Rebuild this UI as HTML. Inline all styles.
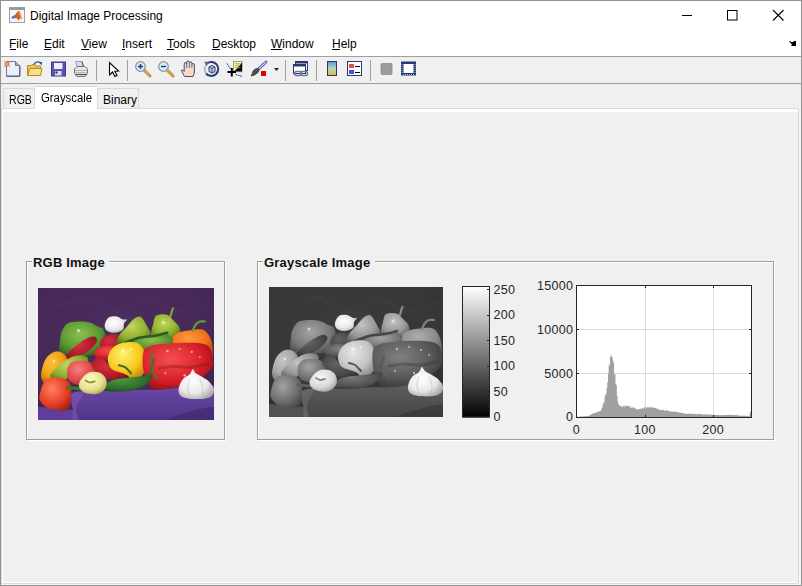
<!DOCTYPE html>
<html><head><meta charset="utf-8">
<style>
*{margin:0;padding:0;box-sizing:border-box}
html,body{width:802px;height:586px;overflow:hidden;background:#f0f0f0;font-family:"Liberation Sans",sans-serif;color:#000}
.a{position:absolute}
#win{position:absolute;left:0;top:0;width:802px;height:586px;border:1px solid #939393;background:#f0f0f0}
#title{left:0;top:0;width:801px;height:56px;background:#fff}
.t{position:absolute;font-size:12px;white-space:nowrap;line-height:14px}
.menu u{text-decoration:none;border-bottom:1px solid #000}
.sep{position:absolute;width:1px;height:21px;top:60px;background:#a0a0a0}
.tab{position:absolute;border:1px solid #d9d9d9;border-bottom:none;background:#f0f0f0}
.lbl{position:absolute;font-size:12px;white-space:nowrap;line-height:12px;color:#262626}
.ptitle{position:absolute;font-size:13px;font-weight:bold;white-space:nowrap;line-height:13px;background:#f0f0f0;padding:0 5px 0 2px;color:#111;letter-spacing:0.2px}
</style></head><body>
<div id="win"></div>
<div class="a" style="left:1px;top:1px;width:800px;height:55px;background:#fff"></div>
<!-- window border lines -->
<div class="a" style="left:0;top:0;width:802px;height:1px;background:#939393"></div>
<div class="a" style="left:0;top:0;width:1px;height:586px;background:#939393"></div>
<div class="a" style="left:801px;top:0;width:1px;height:586px;background:#939393"></div>
<div class="a" style="left:0;top:585px;width:802px;height:1px;background:#939393"></div>
<svg class="a" style="left:0;top:0" width="802" height="90" viewBox="0 0 802 90">
<!-- title icon -->
<rect x="9.5" y="7.5" width="15" height="15" fill="#f4f4f4" stroke="#9aa0a8"/>
<rect x="10" y="8" width="14" height="2" fill="#8c9cb0"/>
<path d="M11 17.5 L15 15 L18 11 L20 11.5 L22 19.5 L20.5 18 L18.5 20.5 L16.5 18 L13 18.5 Z" fill="#d06020"/>
<path d="M11 17.5 L15 15 L16.5 17.5 L13 18.5 Z" fill="#4a80b8"/>
<path d="M18 11 L20 11.5 L22 19.5 L20.5 18 Z" fill="#f0a040"/>
<!-- title bar buttons -->
<rect x="682" y="15" width="10" height="1" fill="#000"/>
<rect x="727.5" y="10.5" width="9.5" height="9.5" fill="none" stroke="#000"/>
<path d="M773 10 L783.5 20.5 M783.5 10 L773 20.5" stroke="#000" stroke-width="1.1"/>
<!-- dock arrow -->
<path d="M789 41.5 L790 41 L791 42 L793 42 L794 41 L796 41 L796 46 L791 46 L792 44.5 L790.5 43 Z" fill="#000"/>
<!-- menu underlines -->
<g fill="#000">
<rect x="10" y="49" width="6" height="1"/>
<rect x="44" y="49" width="7" height="1"/>
<rect x="81" y="49" width="8" height="1"/>
<rect x="122" y="49" width="3" height="1"/>
<rect x="167" y="49" width="7" height="1"/>
<rect x="212" y="49" width="8" height="1"/>
<rect x="271" y="49" width="11" height="1"/>
<rect x="332" y="49" width="8" height="1"/>
</g>
<!-- new doc -->
<path d="M6.5 61.5 H15.5 L19.5 65.5 V76.5 H6.5 Z" fill="#eaf1fb" stroke="#6b7a9c"/>
<path d="M15.5 61.5 V65.5 H19.5" fill="#9fb0d0" stroke="#6b7a9c"/>
<path d="M7 76 H20 V66" fill="none" stroke="#4f5d80" stroke-width="1"/>
<circle cx="7" cy="64" r="2.2" fill="#f0a060" stroke="#d06a30" stroke-width="0.8"/>
<path d="M4 61 L5 62 M10 61 L9 62 M4 67 L5 66 M10 67 L9 66" stroke="#c06030" stroke-width="0.7"/>
<!-- folder -->
<path d="M27.5 65.5 H31 L32 64.5 H35 L36 66 H40.5 V75.5 H27.5 Z" fill="#e9c555" stroke="#b08a28"/>
<path d="M27.5 75.5 L30 68.5 H42 L40.5 75.5 Z" fill="#f7e08a" stroke="#b08a28"/>
<path d="M34 64 Q37 60.5 40.5 63" fill="none" stroke="#2a5a90" stroke-width="1.2"/>
<path d="M39 62 L42 62 L41.5 65.5 Z" fill="#1a4a80"/>
<!-- floppy -->
<rect x="51.5" y="62" width="14" height="14" fill="#5555b5" stroke="#3a3a90"/>
<rect x="54" y="63" width="8.5" height="6" fill="#eef0ff"/>
<rect x="55" y="71" width="6.5" height="4.5" fill="#e0e0f0"/>
<rect x="55.5" y="71.5" width="2" height="2" fill="#202040"/>
<!-- printer -->
<path d="M75.5 61.5 H82 L83.5 66.5 H77 Z" fill="#cfdcf2" stroke="#8898b0" stroke-width="0.9"/>
<path d="M82 61.5 L83.5 66.5" stroke="#505a70" stroke-width="1"/>
<path d="M74.5 69 L77 66.5 H85 L87.5 69 V73.5 L85 76.5 H77 L74.5 73.5 Z" fill="#e6e6e6" stroke="#6a6a6a" stroke-width="0.9"/>
<path d="M75 70.5 H87 M75.5 72.5 H86.5" stroke="#a8a8a8" stroke-width="0.8"/>
<path d="M75.5 74.5 H86.5" stroke="#505050" stroke-width="1.2"/>
<!-- arrow pointer -->
<path d="M109.5 62.5 V75 L112.5 72 L115 76.5 L117 75.5 L114.8 71.2 L118.5 71 Z" fill="#fff" stroke="#000" stroke-width="1.1" stroke-linejoin="miter"/>
<!-- zoom in -->
<path d="M144 70 L150 76" stroke="#a06818" stroke-width="2.8" stroke-linecap="round"/>
<path d="M144 70 L150 76" stroke="#e8b050" stroke-width="1.6" stroke-linecap="round"/>
<circle cx="140.5" cy="66.5" r="4.8" fill="#d8ecf8" stroke="#8090a8" stroke-width="1.2"/>
<path d="M138 66.5 H143 M140.5 64 V69" stroke="#1a3a7a" stroke-width="1.4"/>
<!-- zoom out -->
<path d="M167 70 L173 76" stroke="#a06818" stroke-width="2.8" stroke-linecap="round"/>
<path d="M167 70 L173 76" stroke="#e8b050" stroke-width="1.6" stroke-linecap="round"/>
<circle cx="163.5" cy="66.5" r="4.8" fill="#d8ecf8" stroke="#8090a8" stroke-width="1.2"/>
<path d="M161 66.5 H166" stroke="#1a3a7a" stroke-width="1.4"/>
<!-- hand -->
<path d="M184.5 76.5 L181.8 71.5 Q181 69.5 182.8 70 L184.2 71.5 V64 Q184.2 62.5 185.5 62.5 Q186.5 62.5 186.6 64 V62.3 Q186.7 61 188 61 Q189.2 61 189.3 62.3 V63 Q189.4 61.8 190.6 61.8 Q191.8 61.8 191.9 63.2 V64.5 Q192 63.5 193.2 63.5 Q194.4 63.6 194.4 65 V71 Q194.5 74 193 76.5 Z" fill="#f6dcc0" stroke="#2a3a80" stroke-width="0.9"/>
<path d="M186.6 64 V68 M189.3 63 V68 M191.9 64.5 V68" stroke="#2a3a80" stroke-width="0.7"/>
<!-- rotate -->
<path d="M206.8 63.5 A7 7 0 1 1 206 73.5" fill="none" stroke="#2a3a70" stroke-width="2"/>
<path d="M206 73.5 A7 7 0 0 1 205.5 66.5" fill="none" stroke="#b8bcc8" stroke-width="2"/>
<path d="M204.5 61.5 L209.5 62 L206 66.5 Z" fill="#4a6aa0"/>
<path d="M209 67 L212 65.5 L215 67 V71.5 L212 73 L209 71.5 Z" fill="#c0cce8" stroke="#2a3a70" stroke-width="1"/>
<path d="M209 67 L212 68.5 L215 67 M212 68.5 V73" fill="none" stroke="#2a3a70" stroke-width="0.8"/>
<!-- data cursor -->
<rect x="233.5" y="61.5" width="8.5" height="9.5" fill="#f8f2b0" stroke="#a8a868"/>
<path d="M242.5 62 V72 H234" stroke="#c8c8a0" stroke-width="1"/>
<path d="M235 63.8 H240.5 M235 65.8 H240.5 M235 67.8 H240.5" stroke="#a09a60" stroke-width="0.9"/>
<path d="M227 63.5 L230.5 69 M235.5 74.5 L242.5 76.5" stroke="#2020b0" stroke-width="1" stroke-dasharray="1.6 0.8"/>
<path d="M227.5 72 H236 M231.8 68 V76.5" stroke="#000" stroke-width="2"/>
<!-- brush -->
<path d="M266 62 L258 69.5" stroke="#30409a" stroke-width="2.8" stroke-linecap="round"/>
<path d="M266 62 L258 69.5" stroke="#c8d4f0" stroke-width="1.2" stroke-linecap="round"/>
<path d="M258.5 68.5 Q255 68 253 71 Q252 74 251 76 Q255 75.5 257.5 73 Q260 71 258.5 68.5 Z" fill="#505050" stroke="#303030" stroke-width="0.6"/>
<rect x="261" y="71" width="5" height="5" fill="#e00000"/>
<path d="M274 68 H279 L276.5 71 Z" fill="#202020"/>
<!-- linked -->
<rect x="295.5" y="61.5" width="12" height="9" fill="#fff" stroke="#2a3a70"/>
<rect x="295.5" y="61.5" width="12" height="2" fill="#2a3a70"/>
<rect x="293.5" y="64.5" width="12" height="9" fill="#fff" stroke="#2a3a70"/>
<rect x="293.5" y="64.5" width="12" height="2" fill="#2a3a70"/>
<rect x="294.5" y="71.5" width="7" height="4" rx="2" fill="none" stroke="#6a7a9a" stroke-width="1.4"/>
<rect x="300.5" y="71.5" width="7" height="4" rx="2" fill="none" stroke="#6a7a9a" stroke-width="1.4"/>
<!-- colorbar icon -->
<defs><linearGradient id="cbg" x1="0" y1="0" x2="0" y2="1"><stop offset="0" stop-color="#6a8ae8"/><stop offset="0.5" stop-color="#a8e0b0"/><stop offset="1" stop-color="#f0b040"/></linearGradient></defs>
<rect x="327.5" y="61.5" width="9" height="14" fill="url(#cbg)" stroke="#303860"/>
<!-- legend -->
<rect x="347.5" y="61.5" width="14" height="14" fill="#fff" stroke="#2a3a70"/>
<rect x="349" y="64" width="5" height="4" fill="#e05050"/>
<rect x="349" y="70" width="5" height="4" fill="#5050e0"/>
<path d="M355 66.5 H360 M355 72.5 H360" stroke="#000" stroke-width="1"/>
<!-- gray square -->
<rect x="381" y="63.5" width="11" height="11" rx="1" fill="#9c9c9c" stroke="#8a8a8a" stroke-width="0.8"/>
<!-- plot tools -->
<rect x="401" y="61.5" width="15" height="14" fill="#2a3a70"/>
<rect x="403.5" y="64" width="10" height="9" fill="#fff"/>
<path d="M402 64 V73 M415 64 V73 M403 74.5 H414" stroke="#c8d0e8" stroke-width="0.8" stroke-dasharray="1 1"/>
</svg>

<!-- title -->
<div class="t" style="left:30px;top:9px">Digital Image Processing</div>
<!-- menu -->
<div class="t" style="left:9px;top:37px">File</div>
<div class="t" style="left:44px;top:37px">Edit</div>
<div class="t" style="left:81px;top:37px">View</div>
<div class="t" style="left:122px;top:37px">Insert</div>
<div class="t" style="left:167px;top:37px">Tools</div>
<div class="t" style="left:212px;top:37px">Desktop</div>
<div class="t" style="left:271px;top:37px">Window</div>
<div class="t" style="left:332px;top:37px">Help</div>
<!-- toolbar lines -->
<div class="a" style="left:1px;top:56px;width:800px;height:1px;background:#a0a0a0"></div>
<div class="a" style="left:1px;top:83px;width:800px;height:1px;background:#a0a0a0"></div>
<div class="sep" style="left:96px"></div>
<div class="sep" style="left:127px"></div>
<div class="sep" style="left:285px"></div>
<div class="sep" style="left:316px"></div>
<div class="sep" style="left:370px"></div>
<!-- tabs -->
<div class="tab" style="left:3px;top:88px;width:32px;height:21px"></div>
<div class="tab" style="left:97px;top:88px;width:42px;height:21px"></div>
<!-- tab panel -->
<div class="a" style="left:1px;top:108px;width:798px;height:1px;background:#d9d9d9"></div>
<div class="a" style="left:2px;top:109px;width:796px;height:3px;background:#fff"></div>
<div class="a" style="left:2px;top:109px;width:1px;height:474px;background:#fff"></div>
<div class="a" style="left:1px;top:109px;width:1px;height:476px;background:#dadada"></div>
<div class="a" style="left:798px;top:108px;width:1px;height:476px;background:#d9d9d9"></div>
<div class="a" style="left:799px;top:108px;width:2px;height:477px;background:#f5f5f5"></div>
<div class="a" style="left:2px;top:582px;width:796px;height:1px;background:#fff"></div>
<div class="a" style="left:1px;top:583px;width:798px;height:1px;background:#d9d9d9"></div>
<div class="a" style="left:1px;top:584px;width:800px;height:1px;background:#f5f5f5"></div>
<div class="a" style="left:35px;top:86px;width:62px;height:26px;background:#fff;border-top:1px solid #d9d9d9"></div>
<div class="t" style="left:8.5px;top:93px;transform:scaleX(0.88);transform-origin:0 0">RGB</div>
<div class="t" style="left:40.5px;top:91px;transform:scaleX(0.945);transform-origin:0 0">Grayscale</div>
<div class="t" style="left:103px;top:93px">Binary</div>
<!-- RGB panel -->
<div class="a" style="left:27px;top:262px;width:199px;height:179px;border:1px solid #fff"></div>
<div class="a" style="left:26px;top:261px;width:199px;height:179px;border:1px solid #a0a0a0"></div>
<div class="ptitle" style="left:32px;top:256px;width:77px;padding:0 0 0 1px">RGB Image</div>

<!-- Gray panel -->
<div class="a" style="left:258px;top:262px;width:517px;height:179px;border:1px solid #fff"></div>
<div class="a" style="left:257px;top:261px;width:517px;height:179px;border:1px solid #a0a0a0"></div>
<div class="ptitle" style="left:263px;top:256px;width:112px;padding:0 0 0 1px">Grayscale Image</div>

<!-- PEPPERS -->
<svg class="a" style="left:0;top:0" width="802" height="586" viewBox="0 0 802 586">
<defs>
<filter id="gray" color-interpolation-filters="sRGB"><feColorMatrix type="matrix" values="0.299 0.587 0.114 0 0 0.299 0.587 0.114 0 0 0.299 0.587 0.114 0 0 0 0 0 1 0"/></filter>
<filter id="soft" x="-5%" y="-5%" width="110%" height="110%"><feGaussianBlur stdDeviation="0.7"/></filter>
<radialGradient id="gGreen" cx="0.45" cy="0.35" r="0.7"><stop offset="0" stop-color="#8cc050"/><stop offset="0.6" stop-color="#5a9830"/><stop offset="1" stop-color="#2e5a1a"/></radialGradient>
<radialGradient id="gLGreen" cx="0.45" cy="0.35" r="0.7"><stop offset="0" stop-color="#c0d860"/><stop offset="0.6" stop-color="#90b030"/><stop offset="1" stop-color="#507018"/></radialGradient>
<radialGradient id="gRed" cx="0.4" cy="0.35" r="0.75"><stop offset="0" stop-color="#f45050"/><stop offset="0.6" stop-color="#d8202a"/><stop offset="1" stop-color="#880c14"/></radialGradient>
<radialGradient id="gDRed" cx="0.4" cy="0.35" r="0.75"><stop offset="0" stop-color="#d83040"/><stop offset="0.7" stop-color="#a81828"/><stop offset="1" stop-color="#601018"/></radialGradient>
<radialGradient id="gOrange" cx="0.4" cy="0.35" r="0.75"><stop offset="0" stop-color="#ff9a40"/><stop offset="0.6" stop-color="#f07018"/><stop offset="1" stop-color="#b04010"/></radialGradient>
<radialGradient id="gYellow" cx="0.4" cy="0.35" r="0.75"><stop offset="0" stop-color="#fff070"/><stop offset="0.6" stop-color="#f8c818"/><stop offset="1" stop-color="#c08010"/></radialGradient>
<radialGradient id="gOY" cx="0.4" cy="0.35" r="0.75"><stop offset="0" stop-color="#ffc040"/><stop offset="0.6" stop-color="#f0a010"/><stop offset="1" stop-color="#b06010"/></radialGradient>
<radialGradient id="gPink" cx="0.4" cy="0.35" r="0.75"><stop offset="0" stop-color="#f88080"/><stop offset="0.6" stop-color="#e04848"/><stop offset="1" stop-color="#a02830"/></radialGradient>
<radialGradient id="gTom" cx="0.4" cy="0.35" r="0.75"><stop offset="0" stop-color="#ff8060"/><stop offset="0.6" stop-color="#e84028"/><stop offset="1" stop-color="#982018"/></radialGradient>
<radialGradient id="gCream" cx="0.4" cy="0.35" r="0.75"><stop offset="0" stop-color="#fffcc8"/><stop offset="0.6" stop-color="#e8e090"/><stop offset="1" stop-color="#a0a040"/></radialGradient>
<radialGradient id="gDGreen" cx="0.4" cy="0.35" r="0.75"><stop offset="0" stop-color="#4a9a40"/><stop offset="0.7" stop-color="#2a6a28"/><stop offset="1" stop-color="#183a18"/></radialGradient>
<radialGradient id="gWhite" cx="0.4" cy="0.4" r="0.7"><stop offset="0" stop-color="#ffffff"/><stop offset="0.6" stop-color="#e8e8e6"/><stop offset="1" stop-color="#a8a4a8"/></radialGradient>
<radialGradient id="gBg" cx="0.45" cy="0.3" r="0.8"><stop offset="0" stop-color="#4c2e5c"/><stop offset="0.7" stop-color="#442858"/><stop offset="1" stop-color="#34203f"/></radialGradient>
<linearGradient id="gCloth" x1="0" y1="0" x2="0" y2="1"><stop offset="0" stop-color="#6a4aa8"/><stop offset="1" stop-color="#4a3080"/></linearGradient>
<g id="pep">
<rect x="-2" y="-2" width="180" height="136" fill="url(#gBg)"/>
<path d="M10 20 L60 8" stroke="#5a3a70" stroke-width="0.8" opacity="0.5"/>
<path d="M40 5 L90 30" stroke="#5a3a70" stroke-width="0.8" opacity="0.5"/>
<path d="M100 10 L150 25" stroke="#5a3a70" stroke-width="0.8" opacity="0.5"/>
<path d="M120 30 L170 15" stroke="#5a3a70" stroke-width="0.8" opacity="0.5"/>
<path d="M5 50 L25 40" stroke="#5a3a70" stroke-width="0.8" opacity="0.5"/>
<path d="M150 40 L176 60" stroke="#5a3a70" stroke-width="0.8" opacity="0.5"/>
<path d="M33.0 104.0 C38.8 100.8 55.5 101.7 70.0 101.0 C84.5 100.3 102.3 100.7 120.0 100.0 C137.7 99.3 166.7 91.3 176.0 97.0 C185.3 102.7 199.2 127.8 176.0 134.0 C152.8 140.2 60.5 136.3 37.0 134.0 C13.5 131.7 35.7 125.0 35.0 120.0 C34.3 115.0 27.2 107.2 33.0 104.0Z" fill="url(#gCloth)" />
<path d="M-2.0 118.0 C0.8 115.5 8.7 118.5 15.0 119.0 C21.3 119.5 32.3 118.5 36.0 121.0 C39.7 123.5 43.3 131.8 37.0 134.0 C30.7 136.2 4.5 136.7 -2.0 134.0 C-8.5 131.3 -4.8 120.5 -2.0 118.0Z" fill="#5e3e98" />
<path d="M33.0 104.0 C34.8 101.5 44.2 100.7 45.0 103.0 C45.8 105.3 38.8 112.8 38.0 118.0 C37.2 123.2 40.5 131.3 40.0 134.0 C39.5 136.7 36.0 136.7 35.0 134.0 C34.0 131.3 34.3 123.0 34.0 118.0 C33.7 113.0 31.2 106.5 33.0 104.0Z" fill="#7858b8" opacity="0.6"/>
<path d="M120.0 134.0 C115.7 132.0 140.7 124.7 150.0 122.0 C159.3 119.3 171.7 116.0 176.0 118.0 C180.3 120.0 185.3 131.3 176.0 134.0 C166.7 136.7 124.3 136.0 120.0 134.0Z" fill="#3c2668" opacity="0.6"/>
<path d="M23.0 67.0 C19.3 64.2 21.8 54.2 22.0 50.0 C22.2 45.8 22.8 44.5 24.0 42.0 C25.2 39.5 26.3 36.5 29.0 35.0 C31.7 33.5 36.3 33.2 40.0 33.0 C43.7 32.8 47.8 33.2 51.0 34.0 C54.2 34.8 56.7 36.8 59.0 38.0 C61.3 39.2 63.7 38.2 65.0 41.0 C66.3 43.8 67.5 51.2 67.0 55.0 C66.5 58.8 65.8 62.0 62.0 64.0 C58.2 66.0 50.5 66.5 44.0 67.0 C37.5 67.5 26.7 69.8 23.0 67.0Z" fill="url(#gGreen)" />
<path d="M62.0 52.0 C63.0 49.3 67.0 46.8 70.0 46.0 C73.0 45.2 77.7 45.3 80.0 47.0 C82.3 48.7 84.3 53.2 84.0 56.0 C83.7 58.8 81.3 63.0 78.0 64.0 C74.7 65.0 66.7 64.0 64.0 62.0 C61.3 60.0 61.0 54.7 62.0 52.0Z" fill="url(#gDRed)" />
<path d="M56.0 62.0 C57.0 59.8 61.7 57.7 66.0 57.0 C70.3 56.3 78.0 57.2 82.0 58.0 C86.0 58.8 89.7 60.0 90.0 62.0 C90.3 64.0 89.0 68.7 84.0 70.0 C79.0 71.3 64.7 71.3 60.0 70.0 C55.3 68.7 55.0 64.2 56.0 62.0Z" fill="url(#gRed)" />
<path d="M66.0 36.0 C66.3 33.8 68.0 30.3 70.0 29.0 C72.0 27.7 75.7 27.7 78.0 28.0 C80.3 28.3 82.3 30.5 84.0 31.0 C85.7 31.5 87.8 30.3 88.0 31.0 C88.2 31.7 85.7 33.3 85.0 35.0 C84.3 36.7 85.5 39.5 84.0 41.0 C82.5 42.5 78.7 43.8 76.0 44.0 C73.3 44.2 69.7 43.3 68.0 42.0 C66.3 40.7 65.7 38.2 66.0 36.0Z" fill="url(#gWhite)" />
<path d="M80.0 47.0 C81.7 44.0 85.7 40.7 88.0 38.0 C90.3 35.3 92.0 32.7 94.0 31.0 C96.0 29.3 98.3 28.0 100.0 28.0 C101.7 28.0 102.5 29.0 104.0 31.0 C105.5 33.0 107.8 37.7 109.0 40.0 C110.2 42.3 111.8 43.2 111.0 45.0 C110.2 46.8 107.7 49.7 104.0 51.0 C100.3 52.3 93.3 52.2 89.0 53.0 C84.7 53.8 79.5 57.0 78.0 56.0 C76.5 55.0 78.3 50.0 80.0 47.0Z" fill="url(#gLGreen)" />
<path d="M112.0 46.0 C111.3 43.3 113.3 38.0 114.0 35.0 C114.7 32.0 114.8 29.5 116.0 28.0 C117.2 26.5 118.8 26.2 121.0 26.0 C123.2 25.8 127.0 26.2 129.0 27.0 C131.0 27.8 131.2 29.0 133.0 31.0 C134.8 33.0 139.0 36.3 140.0 39.0 C141.0 41.7 140.8 45.2 139.0 47.0 C137.2 48.8 132.5 49.3 129.0 50.0 C125.5 50.7 120.8 51.7 118.0 51.0 C115.2 50.3 112.7 48.7 112.0 46.0Z" fill="url(#gLGreen)" />
<path d="M131.0 28.0 C131.2 27.3 131.6 25.3 132.0 24.0 C132.4 22.7 133.2 20.7 133.5 20.0" fill="none" stroke="#80a030" stroke-width="2.2" stroke-linecap="round" />
<path d="M95.0 52.0 C97.3 50.0 104.5 47.0 110.0 46.0 C115.5 45.0 124.0 44.7 128.0 46.0 C132.0 47.3 134.3 51.3 134.0 54.0 C133.7 56.7 131.0 60.7 126.0 62.0 C121.0 63.3 109.0 62.7 104.0 62.0 C99.0 61.3 97.5 59.7 96.0 58.0 C94.5 56.3 92.7 54.0 95.0 52.0Z" fill="url(#gGreen)" />
<path d="M86.0 54.0 C88.3 53.2 95.0 50.2 100.0 49.0 C105.0 47.8 111.3 47.8 116.0 47.0 C120.7 46.2 126.0 44.5 128.0 44.0" fill="none" stroke="#2a5a24" stroke-width="2.5" stroke-linecap="round" />
<path d="M133.0 50.0 C133.3 47.7 134.3 45.5 138.0 44.0 C141.7 42.5 150.5 41.3 155.0 41.0 C159.5 40.7 162.3 40.3 165.0 42.0 C167.7 43.7 169.7 47.3 171.0 51.0 C172.3 54.7 173.3 61.3 173.0 64.0 C172.7 66.7 173.5 67.3 169.0 67.0 C164.5 66.7 151.5 63.5 146.0 62.0 C140.5 60.5 138.2 60.0 136.0 58.0 C133.8 56.0 132.7 52.3 133.0 50.0Z" fill="url(#gOrange)" />
<path d="M153.0 42.0 C153.5 41.0 154.8 37.5 156.0 36.0 C157.2 34.5 158.5 33.5 160.0 33.0 C161.5 32.5 164.2 33.0 165.0 33.0" fill="none" stroke="#6a9a30" stroke-width="2.2" stroke-linecap="round" />
<path d="M28.0 66.0 C29.2 64.0 32.7 60.7 36.0 58.0 C39.3 55.3 44.7 51.7 48.0 50.0 C51.3 48.3 54.3 47.5 56.0 48.0 C57.7 48.5 59.0 50.7 58.0 53.0 C57.0 55.3 53.7 59.3 50.0 62.0 C46.3 64.7 39.5 67.7 36.0 69.0 C32.5 70.3 30.3 70.5 29.0 70.0 C27.7 69.5 26.8 68.0 28.0 66.0Z" fill="url(#gDRed)" />
<path d="M3.0 87.0 C2.8 84.2 4.0 79.2 5.0 76.0 C6.0 72.8 7.2 70.2 9.0 68.0 C10.8 65.8 13.5 63.7 16.0 63.0 C18.5 62.3 21.8 62.7 24.0 64.0 C26.2 65.3 29.3 68.0 29.0 71.0 C28.7 74.0 24.7 78.7 22.0 82.0 C19.3 85.3 15.7 89.2 13.0 91.0 C10.3 92.8 7.7 93.7 6.0 93.0 C4.3 92.3 3.2 89.8 3.0 87.0Z" fill="url(#gOY)" />
<path d="M12.0 87.0 C12.0 84.0 18.0 78.3 22.0 75.0 C26.0 71.7 31.8 68.3 36.0 67.0 C40.2 65.7 44.8 66.0 47.0 67.0 C49.2 68.0 50.8 70.8 49.0 73.0 C47.2 75.2 39.3 77.3 36.0 80.0 C32.7 82.7 31.3 86.8 29.0 89.0 C26.7 91.2 24.8 93.3 22.0 93.0 C19.2 92.7 12.0 90.0 12.0 87.0Z" fill="url(#gLGreen)" />
<path d="M69.0 71.0 C68.7 67.0 70.5 62.8 73.0 60.0 C75.5 57.2 79.8 55.0 84.0 54.0 C88.2 53.0 94.5 52.7 98.0 54.0 C101.5 55.3 103.5 58.5 105.0 62.0 C106.5 65.5 107.5 70.8 107.0 75.0 C106.5 79.2 105.0 84.7 102.0 87.0 C99.0 89.3 93.5 89.5 89.0 89.0 C84.5 88.5 78.3 87.0 75.0 84.0 C71.7 81.0 69.3 75.0 69.0 71.0Z" fill="url(#gYellow)" />
<path d="M104.0 64.0 C104.8 60.3 105.7 59.5 109.0 58.0 C112.3 56.5 116.3 55.7 124.0 55.0 C131.7 54.3 147.5 53.5 155.0 54.0 C162.5 54.5 166.0 55.2 169.0 58.0 C172.0 60.8 172.7 67.3 173.0 71.0 C173.3 74.7 174.0 76.3 171.0 80.0 C168.0 83.7 160.5 90.0 155.0 93.0 C149.5 96.0 144.7 96.8 138.0 98.0 C131.3 99.2 119.8 100.8 115.0 100.0 C110.2 99.2 110.8 96.3 109.0 93.0 C107.2 89.7 104.8 84.8 104.0 80.0 C103.2 75.2 103.2 67.7 104.0 64.0Z" fill="url(#gRed)" />
<path d="M114.0 62.0 C113.7 63.7 112.0 68.7 112.0 72.0 C112.0 75.3 113.0 79.0 114.0 82.0 C115.0 85.0 117.3 88.7 118.0 90.0" fill="none" stroke="#4a7a30" stroke-width="2.2" stroke-linecap="round" opacity="0.8"/>
<path d="M120.0 79.0 C122.5 78.7 130.0 77.2 135.0 77.0 C140.0 76.8 144.5 78.3 150.0 78.0 C155.5 77.7 165.0 75.5 168.0 75.0" fill="none" stroke="#801018" stroke-width="3" stroke-linecap="round" opacity="0.35"/>
<circle cx="128" cy="62" r="1.2" fill="#ffd0d0" opacity="0.7"/>
<circle cx="140" cy="60" r="1" fill="#ffd0d0" opacity="0.7"/>
<circle cx="152" cy="63" r="1.1" fill="#ffd0d0" opacity="0.7"/>
<circle cx="126" cy="84" r="1" fill="#ffd0d0" opacity="0.7"/>
<circle cx="145" cy="86" r="1.2" fill="#ffd0d0" opacity="0.7"/>
<circle cx="160" cy="68" r="0.9" fill="#ffd0d0" opacity="0.7"/>
<circle cx="84" cy="62" r="2" fill="#ffffe8" opacity="0.6"/>
<circle cx="92" cy="60" r="1.2" fill="#ffffe8" opacity="0.6"/>
<circle cx="40" cy="42" r="1.5" fill="#ffffe8" opacity="0.6"/>
<circle cx="124" cy="34" r="1.5" fill="#ffffe8" opacity="0.6"/>
<circle cx="16" cy="72" r="1.3" fill="#ffffe8" opacity="0.6"/>
<path d="M29.0 80.0 C29.7 77.2 31.2 74.3 34.0 73.0 C36.8 71.7 42.5 71.5 46.0 72.0 C49.5 72.5 53.3 73.7 55.0 76.0 C56.7 78.3 56.8 83.0 56.0 86.0 C55.2 89.0 53.0 92.5 50.0 94.0 C47.0 95.5 41.3 95.7 38.0 95.0 C34.7 94.3 31.5 92.5 30.0 90.0 C28.5 87.5 28.3 82.8 29.0 80.0Z" fill="url(#gPink)" />
<path d="M53.0 75.0 C53.0 72.7 56.0 69.8 58.0 69.0 C60.0 68.2 62.5 68.2 65.0 70.0 C67.5 71.8 69.8 77.7 73.0 80.0 C76.2 82.3 81.2 82.7 84.0 84.0 C86.8 85.3 90.0 86.7 90.0 88.0 C90.0 89.3 87.2 91.7 84.0 92.0 C80.8 92.3 75.3 91.5 71.0 90.0 C66.7 88.5 61.0 85.5 58.0 83.0 C55.0 80.5 53.0 77.3 53.0 75.0Z" fill="url(#gDRed)" />
<path d="M80.0 76.0 C81.0 76.3 84.0 76.7 86.0 78.0 C88.0 79.3 91.0 83.0 92.0 84.0" fill="none" stroke="#3a6a28" stroke-width="2" stroke-linecap="round" />
<path d="M2.0 104.0 C2.8 100.7 4.3 93.7 7.0 91.0 C9.7 88.3 14.0 87.7 18.0 88.0 C22.0 88.3 28.5 89.8 31.0 93.0 C33.5 96.2 33.0 102.8 33.0 107.0 C33.0 111.2 32.8 115.7 31.0 118.0 C29.2 120.3 25.7 121.0 22.0 121.0 C18.3 121.0 12.3 119.7 9.0 118.0 C5.7 116.3 3.2 113.3 2.0 111.0 C0.8 108.7 1.2 107.3 2.0 104.0Z" fill="url(#gTom)" />
<path d="M29.0 98.0 C30.0 98.1 32.8 98.3 35.0 98.5 C37.2 98.7 40.8 98.9 42.0 99.0" fill="none" stroke="#3a7a28" stroke-width="3" stroke-linecap="round" />
<path d="M64.0 98.0 C65.3 96.3 68.2 92.7 73.0 91.0 C77.8 89.3 87.8 88.7 93.0 88.0 C98.2 87.3 101.2 87.7 104.0 87.0 C106.8 86.3 108.5 83.8 110.0 84.0 C111.5 84.2 113.5 86.2 113.0 88.0 C112.5 89.8 110.3 92.8 107.0 95.0 C103.7 97.2 98.3 99.8 93.0 101.0 C87.7 102.2 79.7 102.0 75.0 102.0 C70.3 102.0 66.8 101.7 65.0 101.0 C63.2 100.3 62.7 99.7 64.0 98.0Z" fill="url(#gDGreen)" />
<path d="M110.0 86.0 C110.3 84.7 111.2 80.7 112.0 78.0 C112.8 75.3 114.5 71.3 115.0 70.0" fill="none" stroke="#3a7030" stroke-width="2" stroke-linecap="round" />
<path d="M41.0 93.0 C42.2 90.3 45.8 85.7 49.0 84.0 C52.2 82.3 57.0 82.2 60.0 83.0 C63.0 83.8 65.8 86.5 67.0 89.0 C68.2 91.5 68.2 95.5 67.0 98.0 C65.8 100.5 63.0 103.0 60.0 104.0 C57.0 105.0 52.0 104.7 49.0 104.0 C46.0 103.3 43.3 101.8 42.0 100.0 C40.7 98.2 39.8 95.7 41.0 93.0Z" fill="url(#gCream)" />
<path d="M47.0 91.0 C47.7 91.3 49.5 92.8 51.0 93.0 C52.5 93.2 55.2 92.2 56.0 92.0" fill="none" stroke="#7a9a30" stroke-width="1.8" stroke-linecap="round" />
<path d="M153.0 80.0 C154.0 79.8 154.3 82.7 156.0 84.0 C157.7 85.3 160.7 86.5 163.0 88.0 C165.3 89.5 168.2 91.0 170.0 93.0 C171.8 95.0 173.7 97.8 174.0 100.0 C174.3 102.2 173.7 104.5 172.0 106.0 C170.3 107.5 167.7 108.5 164.0 109.0 C160.3 109.5 153.8 109.5 150.0 109.0 C146.2 108.5 142.8 107.7 141.0 106.0 C139.2 104.3 138.7 101.7 139.0 99.0 C139.3 96.3 141.2 92.3 143.0 90.0 C144.8 87.7 148.3 86.7 150.0 85.0 C151.7 83.3 152.0 80.2 153.0 80.0Z" fill="url(#gWhite)" />
<path d="M150.0 90.0 C149.7 91.3 148.0 95.3 148.0 98.0 C148.0 100.7 149.7 104.7 150.0 106.0" fill="none" stroke="#b8b4b8" stroke-width="0.8" stroke-linecap="round" opacity="0.7"/>
<path d="M160.0 90.0 C160.5 91.5 162.7 96.2 163.0 99.0 C163.3 101.8 162.2 105.7 162.0 107.0" fill="none" stroke="#b8b4b8" stroke-width="0.8" stroke-linecap="round" opacity="0.7"/>

</g>
</defs>
<svg x="38" y="288" width="176" height="132" viewBox="0 0 174 130" preserveAspectRatio="none"><g filter="url(#soft)"><use href="#pep"/></g></svg>
<svg x="269" y="287" width="174" height="130" viewBox="0 0 174 130"><g filter="url(#gray)"><g filter="url(#soft)"><use href="#pep"/></g></g></svg>
</svg>

<!-- /PEPPERS -->

<!-- AXES -->
<svg class="a" style="left:0;top:0" width="802" height="586" viewBox="0 0 802 586" font-family="Liberation Sans, sans-serif" font-size="12.5" letter-spacing="0.3" fill="#262626">
<defs><linearGradient id="cbar" x1="0" y1="1" x2="0" y2="0"><stop offset="0" stop-color="#000"/><stop offset="1" stop-color="#fff"/></linearGradient></defs>
<rect x="462.5" y="286.5" width="27" height="131" fill="url(#cbar)"/>
<rect x="462.5" y="286.5" width="27" height="130.5" fill="none" stroke="#262626" stroke-width="1"/>
<path d="M487 416.5 H489" stroke="#262626" stroke-width="1"/>
<text x="493.5" y="421.1">0</text>
<path d="M487 391.5 H489" stroke="#262626" stroke-width="1"/>
<text x="493.5" y="395.7">50</text>
<path d="M487 366.5 H489" stroke="#262626" stroke-width="1"/>
<text x="493.5" y="370.3">100</text>
<path d="M487 340.5 H489" stroke="#262626" stroke-width="1"/>
<text x="493.5" y="344.8">150</text>
<path d="M487 315.5 H489" stroke="#262626" stroke-width="1"/>
<text x="493.5" y="319.4">200</text>
<path d="M487 289.5 H489" stroke="#262626" stroke-width="1"/>
<text x="493.5" y="294.0">250</text>
<rect x="576.5" y="285.5" width="175" height="132" fill="#fff"/>
<path d="M577 373.5 H751 M577 329.5 H751 M645.5 286 V417 M713.5 286 V417" stroke="#dcdcdc" stroke-width="1"/>
<path d="M576.50 417.00 L576.50 416.71 L577.18 416.71 L577.18 416.70 L577.87 416.70 L577.87 416.68 L578.55 416.68 L578.55 416.69 L579.23 416.69 L579.23 416.63 L579.92 416.63 L579.92 416.60 L580.60 416.60 L580.60 416.56 L581.29 416.56 L581.29 416.54 L581.97 416.54 L581.97 416.48 L582.65 416.48 L582.65 416.45 L583.34 416.45 L583.34 416.44 L584.02 416.44 L584.02 416.31 L584.70 416.31 L584.70 416.26 L585.39 416.26 L585.39 416.15 L586.07 416.15 L586.07 416.16 L586.75 416.16 L586.75 416.11 L587.44 416.11 L587.44 416.05 L588.12 416.05 L588.12 416.05 L588.80 416.05 L588.80 415.47 L589.49 415.47 L589.49 415.28 L590.17 415.28 L590.17 414.93 L590.86 414.93 L590.86 414.41 L591.54 414.41 L591.54 413.71 L592.22 413.71 L592.22 413.54 L592.91 413.54 L592.91 413.58 L593.59 413.58 L593.59 413.30 L594.27 413.30 L594.27 412.75 L594.96 412.75 L594.96 412.72 L595.64 412.72 L595.64 412.66 L596.32 412.66 L596.32 412.30 L597.01 412.30 L597.01 411.79 L597.69 411.79 L597.69 411.18 L598.38 411.18 L598.38 411.98 L599.06 411.98 L599.06 411.19 L599.74 411.19 L599.74 410.67 L600.43 410.67 L600.43 410.79 L601.11 410.79 L601.11 409.56 L601.79 409.56 L601.79 407.76 L602.48 407.76 L602.48 404.38 L603.16 404.38 L603.16 403.31 L603.84 403.31 L603.84 402.22 L604.53 402.22 L604.53 396.68 L605.21 396.68 L605.21 394.74 L605.89 394.74 L605.89 393.37 L606.58 393.37 L606.58 388.06 L607.26 388.06 L607.26 382.20 L607.95 382.20 L607.95 373.66 L608.63 373.66 L608.63 364.14 L609.31 364.14 L609.31 365.98 L610.00 365.98 L610.00 356.73 L610.68 356.73 L610.68 354.81 L611.36 354.81 L611.36 356.92 L612.05 356.92 L612.05 357.62 L612.73 357.62 L612.73 360.63 L613.41 360.63 L613.41 362.96 L614.10 362.96 L614.10 374.68 L614.78 374.68 L614.78 373.79 L615.46 373.79 L615.46 384.07 L616.15 384.07 L616.15 385.18 L616.83 385.18 L616.83 395.75 L617.52 395.75 L617.52 401.57 L618.20 401.57 L618.20 404.24 L618.88 404.24 L618.88 405.76 L619.57 405.76 L619.57 404.90 L620.25 404.90 L620.25 406.61 L620.93 406.61 L620.93 406.18 L621.62 406.18 L621.62 406.29 L622.30 406.29 L622.30 407.17 L622.98 407.17 L622.98 406.15 L623.67 406.15 L623.67 405.12 L624.35 405.12 L624.35 406.95 L625.04 406.95 L625.04 405.64 L625.72 405.64 L625.72 406.25 L626.40 406.25 L626.40 405.13 L627.09 405.13 L627.09 406.08 L627.77 406.08 L627.77 406.07 L628.45 406.07 L628.45 406.22 L629.14 406.22 L629.14 406.58 L629.82 406.58 L629.82 407.70 L630.50 407.70 L630.50 406.22 L631.19 406.22 L631.19 408.05 L631.87 408.05 L631.87 407.30 L632.55 407.30 L632.55 407.29 L633.24 407.29 L633.24 408.30 L633.92 408.30 L633.92 407.95 L634.61 407.95 L634.61 407.61 L635.29 407.61 L635.29 408.44 L635.97 408.44 L635.97 408.95 L636.66 408.95 L636.66 410.05 L637.34 410.05 L637.34 409.13 L638.02 409.13 L638.02 409.01 L638.71 409.01 L638.71 409.04 L639.39 409.04 L639.39 409.33 L640.07 409.33 L640.07 408.56 L640.76 408.56 L640.76 408.91 L641.44 408.91 L641.44 408.56 L642.12 408.56 L642.12 408.03 L642.81 408.03 L642.81 408.71 L643.49 408.71 L643.49 408.30 L644.18 408.30 L644.18 406.86 L644.86 406.86 L644.86 407.42 L645.54 407.42 L645.54 408.52 L646.23 408.52 L646.23 407.75 L646.91 407.75 L646.91 407.29 L647.59 407.29 L647.59 406.80 L648.28 406.80 L648.28 407.32 L648.96 407.32 L648.96 407.62 L649.64 407.62 L649.64 407.64 L650.33 407.64 L650.33 406.73 L651.01 406.73 L651.01 407.06 L651.70 407.06 L651.70 407.67 L652.38 407.67 L652.38 407.61 L653.06 407.61 L653.06 407.87 L653.75 407.87 L653.75 407.37 L654.43 407.37 L654.43 408.28 L655.11 408.28 L655.11 407.92 L655.80 407.92 L655.80 408.02 L656.48 408.02 L656.48 408.49 L657.16 408.49 L657.16 409.41 L657.85 409.41 L657.85 408.66 L658.53 408.66 L658.53 409.87 L659.21 409.87 L659.21 409.45 L659.90 409.45 L659.90 410.04 L660.58 410.04 L660.58 410.54 L661.27 410.54 L661.27 409.76 L661.95 409.76 L661.95 409.81 L662.63 409.81 L662.63 410.03 L663.32 410.03 L663.32 410.00 L664.00 410.00 L664.00 410.49 L664.68 410.49 L664.68 410.64 L665.37 410.64 L665.37 410.52 L666.05 410.52 L666.05 409.83 L666.73 409.83 L666.73 410.37 L667.42 410.37 L667.42 410.99 L668.10 410.99 L668.10 410.71 L668.79 410.71 L668.79 411.20 L669.47 411.20 L669.47 411.30 L670.15 411.30 L670.15 410.93 L670.84 410.93 L670.84 411.49 L671.52 411.49 L671.52 411.96 L672.20 411.96 L672.20 411.79 L672.89 411.79 L672.89 411.55 L673.57 411.55 L673.57 411.62 L674.25 411.62 L674.25 411.36 L674.94 411.36 L674.94 412.06 L675.62 412.06 L675.62 411.70 L676.30 411.70 L676.30 411.89 L676.99 411.89 L676.99 412.18 L677.67 412.18 L677.67 412.02 L678.36 412.02 L678.36 412.25 L679.04 412.25 L679.04 412.74 L679.72 412.74 L679.72 412.36 L680.41 412.36 L680.41 413.07 L681.09 413.07 L681.09 412.87 L681.77 412.87 L681.77 413.01 L682.46 413.01 L682.46 413.04 L683.14 413.04 L683.14 413.43 L683.82 413.43 L683.82 413.40 L684.51 413.40 L684.51 413.54 L685.19 413.54 L685.19 413.44 L685.88 413.44 L685.88 413.92 L686.56 413.92 L686.56 413.76 L687.24 413.76 L687.24 413.83 L687.93 413.83 L687.93 414.04 L688.61 414.04 L688.61 413.29 L689.29 413.29 L689.29 413.83 L689.98 413.83 L689.98 414.11 L690.66 414.11 L690.66 413.57 L691.34 413.57 L691.34 414.05 L692.03 414.05 L692.03 413.79 L692.71 413.79 L692.71 413.71 L693.39 413.71 L693.39 414.00 L694.08 414.00 L694.08 413.97 L694.76 413.97 L694.76 414.01 L695.45 414.01 L695.45 413.94 L696.13 413.94 L696.13 414.23 L696.81 414.23 L696.81 414.16 L697.50 414.16 L697.50 414.00 L698.18 414.00 L698.18 413.83 L698.86 413.83 L698.86 413.95 L699.55 413.95 L699.55 413.80 L700.23 413.80 L700.23 414.02 L700.91 414.02 L700.91 414.27 L701.60 414.27 L701.60 414.25 L702.28 414.25 L702.28 414.60 L702.96 414.60 L702.96 414.46 L703.65 414.46 L703.65 414.51 L704.33 414.51 L704.33 414.35 L705.02 414.35 L705.02 414.33 L705.70 414.33 L705.70 414.56 L706.38 414.56 L706.38 414.60 L707.07 414.60 L707.07 414.78 L707.75 414.78 L707.75 414.61 L708.43 414.61 L708.43 414.60 L709.12 414.60 L709.12 414.61 L709.80 414.61 L709.80 414.81 L710.48 414.81 L710.48 414.46 L711.17 414.46 L711.17 414.60 L711.85 414.60 L711.85 414.80 L712.54 414.80 L712.54 414.89 L713.22 414.89 L713.22 414.90 L713.90 414.90 L713.90 414.87 L714.59 414.87 L714.59 414.92 L715.27 414.92 L715.27 414.89 L715.95 414.89 L715.95 414.88 L716.64 414.88 L716.64 414.84 L717.32 414.84 L717.32 414.90 L718.00 414.90 L718.00 415.08 L718.69 415.08 L718.69 415.06 L719.37 415.06 L719.37 415.18 L720.05 415.18 L720.05 415.23 L720.74 415.23 L720.74 414.93 L721.42 414.93 L721.42 415.18 L722.11 415.18 L722.11 414.89 L722.79 414.89 L722.79 415.14 L723.47 415.14 L723.47 415.06 L724.16 415.06 L724.16 414.94 L724.84 414.94 L724.84 415.05 L725.52 415.05 L725.52 414.99 L726.21 414.99 L726.21 415.05 L726.89 415.05 L726.89 415.06 L727.57 415.06 L727.57 415.01 L728.26 415.01 L728.26 415.06 L728.94 415.06 L728.94 414.76 L729.62 414.76 L729.62 414.97 L730.31 414.97 L730.31 414.72 L730.99 414.72 L730.99 415.25 L731.68 415.25 L731.68 414.90 L732.36 414.90 L732.36 414.89 L733.04 414.89 L733.04 415.06 L733.73 415.06 L733.73 414.96 L734.41 414.96 L734.41 415.07 L735.09 415.07 L735.09 415.23 L735.78 415.23 L735.78 415.22 L736.46 415.22 L736.46 415.04 L737.14 415.04 L737.14 415.36 L737.83 415.36 L737.83 415.42 L738.51 415.42 L738.51 415.55 L739.20 415.55 L739.20 415.55 L739.88 415.55 L739.88 415.73 L740.56 415.73 L740.56 415.70 L741.25 415.70 L741.25 415.54 L741.93 415.54 L741.93 415.68 L742.61 415.68 L742.61 415.75 L743.30 415.75 L743.30 415.76 L743.98 415.76 L743.98 415.74 L744.66 415.74 L744.66 415.87 L745.35 415.87 L745.35 415.81 L746.03 415.81 L746.03 415.91 L746.71 415.91 L746.71 416.01 L747.40 416.01 L747.40 415.95 L748.08 415.95 L748.08 416.22 L748.77 416.22 L748.77 416.15 L749.45 416.15 L749.45 414.33 L750.13 414.33 L750.13 411.62 L750.82 411.62 L750.82 410.93 L751.50 410.93 L751.50 417.00 Z" fill="#a0a0a0"/>
<rect x="576.5" y="285.5" width="175" height="132" fill="none" stroke="#262626" stroke-width="1"/>
<path d="M577 373.5 H579 M749 373.5 H751" stroke="#262626" stroke-width="1"/>
<text x="573.3" y="377.8" text-anchor="end">5000</text>
<path d="M577 329.5 H579 M749 329.5 H751" stroke="#262626" stroke-width="1"/>
<text x="573.3" y="333.9" text-anchor="end">10000</text>
<text x="573.3" y="289.9" text-anchor="end">15000</text>
<text x="573.3" y="420.9" text-anchor="end">0</text>
<text x="576.5" y="433.8" text-anchor="middle">0</text>
<path d="M645.5 417 V415 M645.5 286 V288" stroke="#262626" stroke-width="1"/>
<text x="644.9" y="433.8" text-anchor="middle">100</text>
<path d="M713.5 417 V415 M713.5 286 V288" stroke="#262626" stroke-width="1"/>
<text x="713.2" y="433.8" text-anchor="middle">200</text>
</svg>
<!-- /AXES -->
</body></html>
